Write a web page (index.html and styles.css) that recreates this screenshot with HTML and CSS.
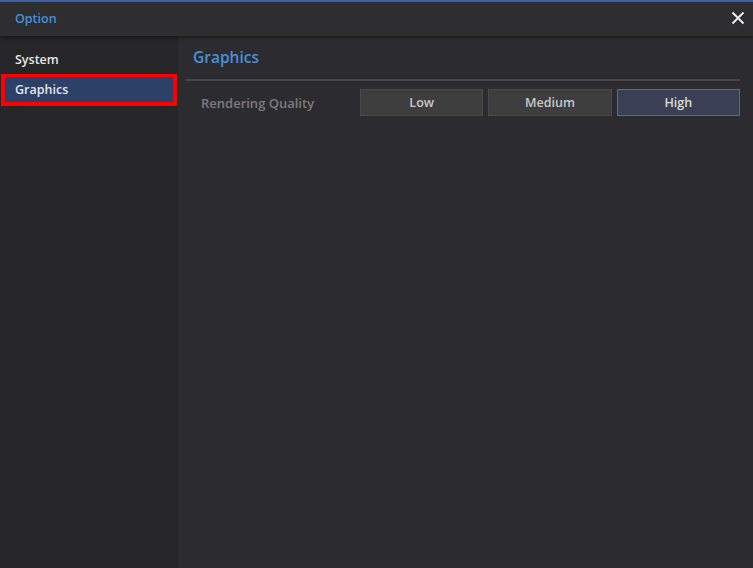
FILE: index.html
```html
<!DOCTYPE html>
<html lang="en">
<head>
    <meta charset="UTF-8">
    <title>Option</title>
    <link rel="stylesheet" href="styles.css">
</head>
<body>
    <div class="window">
        <div class="titlebar">
            <span class="title">Option</span>
            <span class="close">
                <svg width="14" height="14" viewBox="0 0 14 14"><path d="M1.5 1.5L12.5 12.5M12.5 1.5L1.5 12.5" stroke="#f2f2f2" stroke-width="1.8"/></svg>
            </span>
        </div>
        <div class="body">
            <div class="sidebar">
                <div class="nav-item">System</div>
                <div class="nav-item active">Graphics</div>
            </div>
            <div class="content">
                <h2>Graphics</h2>
                <div class="row">
                    <span class="label">Rendering Quality</span>
                    <div class="choices">
                        <button>Low</button>
                        <button>Medium</button>
                        <button class="selected">High</button>
                    </div>
                </div>
            </div>
        </div>
    </div>
</body>
</html>
```

FILE: styles.css
```css
html, body {
    margin: 0;
    padding: 0;
    height: 100%;
    background-color: #2c2c30;
    font-family: "Open Sans", "Noto Sans", sans-serif;
}
.window {
    height: 568px;
    display: flex;
    flex-direction: column;
    border-top: 2px solid #3a5ea8;
    box-sizing: border-box;
}
.titlebar {
    height: 34px;
    flex: none;
    display: flex;
    align-items: center;
    justify-content: space-between;
    padding: 0 8px 0 15px;
    background-color: #2e2e30;
    box-shadow: 0 2px 3px rgba(0,0,0,0.35);
    position: relative;
    z-index: 1;
}
.title {
    color: #4a8fd8;
    font-size: 12.5px;
    font-weight: 600;
    margin-top: -1px;
}
.close {
    display: flex;
    margin-top: -3px;
}
.body {
    flex: 1;
    display: flex;
}
.sidebar {
    width: 178px;
    flex: none;
    background-color: #262628;
    padding-top: 9px;
    box-sizing: border-box;
}
.nav-item {
    height: 30px;
    line-height: 30px;
    padding-left: 15px;
    color: #e6e6e6;
    font-size: 12.5px;
    font-weight: 600;
}
.nav-item.active {
    margin: -1px 1px 0;
    padding-left: 10px;
    height: 25px;
    line-height: 25px;
    background-color: #2c4068;
    border: 4px solid #ff0000;
    border-top-width: 3px;
}
.content {
    flex: 1;
    padding: 10px 13px 0 8px;
}
h2 {
    margin: 0;
    padding: 0 0 11px 7px;
    color: #4a8fd8;
    font-size: 15.5px;
    font-weight: 600;
    border-bottom: 2px solid #47474b;
}
.row {
    display: flex;
    align-items: center;
    margin-top: 8px;
}
.label {
    width: 174px;
    box-sizing: border-box;
    padding-left: 15px;
    color: #7c7c7e;
    font-size: 13px;
    font-weight: 600;
}
.choices {
    flex: 1;
    display: flex;
    gap: 5px;
}
button {
    flex: 1;
    height: 27px;
    background-color: #3e3e3f;
    border: 1px solid #4a4a4c;
    color: #c8c8c8;
    font-family: inherit;
    font-size: 12.5px;
    font-weight: 600;
    padding: 0;
}
button.selected {
    background-color: #3a4156;
    border-color: #4b6ca6;
    color: #dcdcdc;
}
```
